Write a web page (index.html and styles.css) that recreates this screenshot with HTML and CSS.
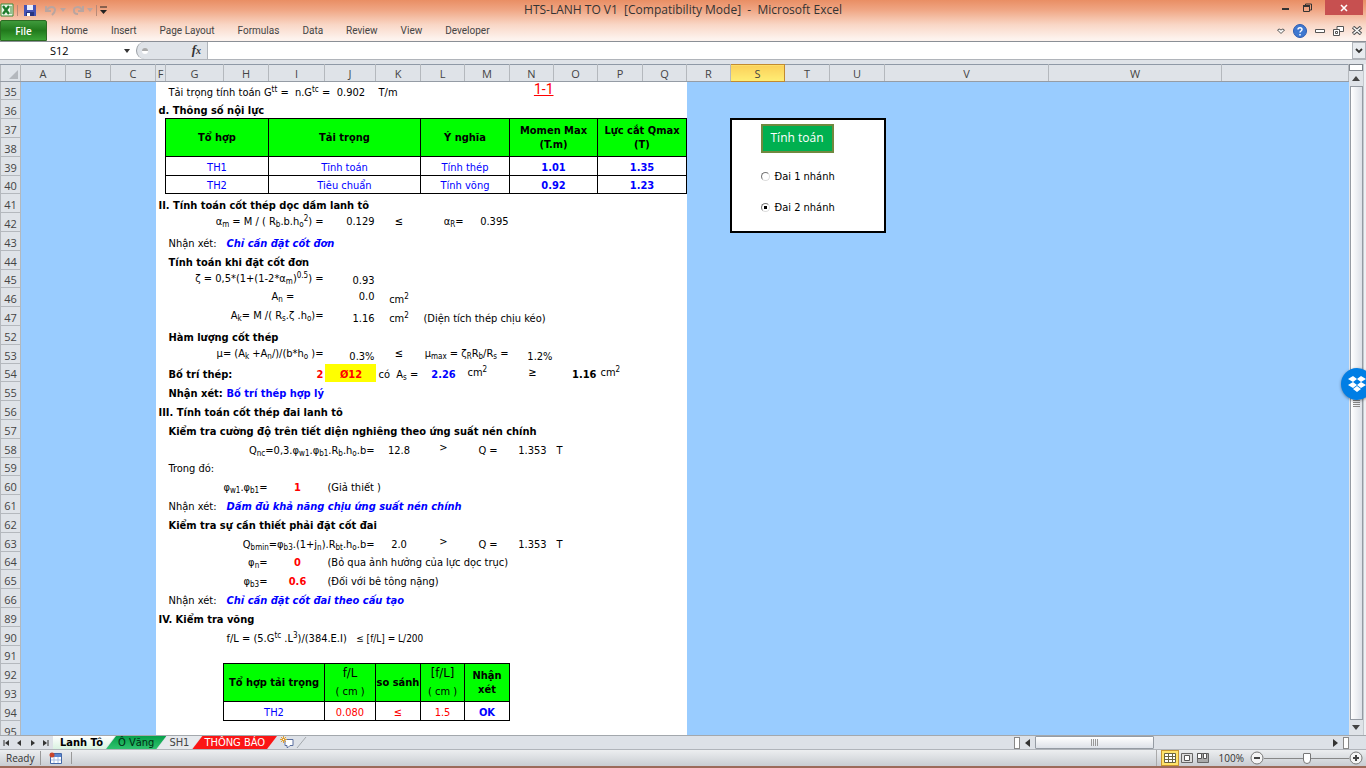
FILE: index.html
```
<!doctype html>
<html lang="vi">
  <head>
    <meta charset="UTF-8" />
    <meta name="viewport" content="width=device-width, initial-scale=1.0" />
    <title>HTS-LANH TO V1 [Compatibility Mode] - Microsoft Excel</title>
    <link rel="stylesheet" href="styles.css">
  </head>
  <body>
    <header class="window-top">
      <div class="title-bar">
        <div class="quick-access">
          <svg width="14" height="14" viewBox="0 0 14 14"><path d="M1 1h12v12H1z" fill="#eef6e8" stroke="#3d8b37"/><path d="M3 3l6 8M9 3l-6 8" stroke="#1d7a2c" stroke-width="2.4"/><path d="M11 3v8" stroke="#3d8b37"/></svg>
          <span class="divider"></span>
          <button class="icon-btn save" aria-label="Save"><svg width="12" height="12" viewBox="0 0 12 12"><path d="M0 1h12v11H0z" fill="#4653b5"/><path d="M3 1h6v5H3z" fill="#e9eefb"/><path d="M2 8h8v4H2z" fill="#293580"/><path d="M3 9h3v3H3z" fill="#fff"/></svg></button>
          <button class="icon-btn" aria-label="Undo"><svg width="12" height="11" viewBox="0 0 12 11"><path d="M1 1v5h5M1.500 5.500C4 1 10 1 10 5c0 2-1 3-3 5" fill="none" stroke="#b9a5a0" stroke-width="2"/></svg></button>
          <span class="caret faint"></span>
          <button class="icon-btn redo" aria-label="Redo"><svg width="12" height="11" viewBox="0 0 12 11"><path d="M11 1v5H6M10 5C8 1 1 1 2 6c0 2 2 3 4 3" fill="none" stroke="#b9a5a0" stroke-width="2"/></svg></button>
          <span class="caret faint"></span>
          <span class="divider"></span>
          <button class="icon-btn" aria-label="Customize"><svg width="7" height="8" viewBox="0 0 7 8"><path d="M0 1h7" stroke="#222"/><path d="M0 4h7L3.500 8z" fill="#222"/></svg></button>
        </div>
        <h1>HTS-LANH TO V1 &nbsp;[Compatibility Mode] &nbsp;- &nbsp;Microsoft Excel</h1>
        <div class="window-buttons">
          <button class="icon-btn" aria-label="Minimize"><svg width="8" height="8" viewBox="0 0 8 8"><path d="M0 6h7" stroke="#333" stroke-width="2"/></svg></button>
          <button class="icon-btn" aria-label="Restore"><svg width="9" height="9" viewBox="0 0 9 9"><path d="M.5 3.500h6v5h-6zM2.500 3V1h6v6H7" fill="none" stroke="#333"/><path d="M0 3h7" stroke="#333" stroke-width="2"/></svg></button>
          <button class="close" aria-label="Close"><svg width="8" height="8" viewBox="0 0 8 8"><path d="M1 1l6 6M7 1L1 7" stroke="#fff" stroke-width="1.600"/></svg></button>
        </div>
      </div>
      <nav class="ribbon">
        <button class="file-tab">File</button>
        <a href="#">Home</a>
        <a href="#">Insert</a>
        <a href="#">Page Layout</a>
        <a href="#">Formulas</a>
        <a href="#">Data</a>
        <a href="#">Review</a>
        <a href="#">View</a>
        <a href="#">Developer</a>
        <div class="ribbon-tools">
          <svg width="8" height="6" viewBox="0 0 8 6"><path d="M.5 2Q2 0 4 2q2-2 3.500 0L4 5.500z" fill="#fff" stroke="#555"/></svg>
          <button class="icon-btn" aria-label="Help"><svg width="14" height="14" viewBox="0 0 14 14"><circle cx="7" cy="7" r="6.500" fill="#3f78d0" stroke="#2c5cb0"/><path d="M5 5.500C5 3 9 3 9 5.500 9 7 7 7 7 8.500M7 10v1.500" fill="none" stroke="#fff" stroke-width="1.500"/></svg></button>
          <button class="icon-btn" aria-label="Minimize workbook"><svg width="10" height="6" viewBox="0 0 10 6"><path d="M.5 1.500h9v3h-9z" fill="#fff" stroke="#555"/></svg></button>
          <button class="icon-btn" aria-label="Restore workbook"><svg width="11" height="10" viewBox="0 0 11 10"><path d="M4 .5h6.500v5H4z" fill="#fff" stroke="#555"/><path d="M.5 3.500h6v6h-6z" fill="#fff" stroke="#555"/><path d="M2.500 5.500h2v2h-2z" fill="none" stroke="#555"/></svg></button>
          <button class="icon-btn" aria-label="Close workbook"><svg width="10" height="9" viewBox="0 0 10 9"><path d="M1 1l8 7M9 1L1 8" stroke="#555" stroke-width="3.500"/><path d="M1.500 1.500l7 6M8.500 1.500l-7 6" stroke="#fff" stroke-width="1.400"/></svg></button>
        </div>
      </nav>
    </header>

    <div class="formula-bar">
      <input class="name-box" type="text" value="S12" aria-label="Name box" />
      <span class="caret"></span>
      <div class="fx-area"><span class="fx-dot"></span><button class="fx-btn">f<small>x</small></button></div>
      <input class="formula-input" type="text" aria-label="Formula" />
      <button class="expand" aria-label="Expand formula bar"><svg width="8" height="6" viewBox="0 0 8 6"><path d="M1 1l3 3 3-3" fill="none" stroke="#333" stroke-width="1.800"/></svg></button>
    </div>

    <main class="workbook">
      <div class="sheet">
        <table class="grid">
          <colgroup>
            <col class="w20"><col class="w45"><col class="w45"><col class="w45"><col class="w10"><col class="w58">
            <col class="w45"><col class="w56"><col class="w51"><col class="w45"><col class="w44"><col class="w45">
            <col class="w44"><col class="w44"><col class="w45"><col class="w44"><col class="w44"><col class="w54">
            <col class="w45"><col class="w55"><col class="w164"><col class="w173"><col>
          </colgroup>
          <thead>
            <tr>
              <th class="corner"><svg width="9" height="9" viewBox="0 0 9 9"><path d="M9 0v9H0z" fill="#b4b8bd"/></svg></th>
              <th>A</th><th>B</th><th>C</th><th>F</th><th>G</th><th>H</th><th>I</th><th>J</th><th>K</th><th>L</th><th>M</th>
              <th>N</th><th>O</th><th>P</th><th>Q</th><th>R</th><th class="selected">S</th><th>T</th><th>U</th><th>V</th><th>W</th><th></th>
            </tr>
          </thead>
          <tbody>
            <tr><th>35</th><td class="side" colspan="3"></td><td></td><td class="r" colspan="3">Tải trọng tính toán G<sup>tt</sup> =&nbsp; n.G<sup>tc</sup> =</td><td class="c">0.902</td><td>T/m</td><td colspan="2"></td><td class="section-mark"><u>1-1</u></td><td colspan="3"></td><td class="side" colspan="7"></td></tr>
            <tr><th>36</th><td class="side" colspan="3"></td><td class="b" colspan="12">d. Thông số nội lực</td><td class="side" colspan="7"></td></tr>
            <tr>
              <th>37</th><td class="side" colspan="3"></td><td></td>
              <td class="box head" colspan="2" rowspan="2">Tổ hợp</td><td class="box head" colspan="3" rowspan="2">Tải trọng</td><td class="box head" colspan="2" rowspan="2">Ý nghĩa</td><td class="box head" colspan="2" rowspan="2">Momen Max<br>(T.m)</td><td class="box head" colspan="2" rowspan="2">Lực cắt Qmax<br>(T)</td>
              <td class="side"></td>
              <td class="panel" colspan="3" rowspan="6">
                <form class="options">
                  <button type="button" class="calc-btn">Tính toán</button>
                  <label><input type="radio" name="dai">Đai 1 nhánh</label>
                  <label><input type="radio" name="dai" checked>Đai 2 nhánh</label>
                </form>
              </td>
              <td class="side" colspan="3"></td>
            </tr>
            <tr><th>38</th><td class="side" colspan="3"></td><td></td><td class="side"></td><td class="side" colspan="3"></td></tr>
            <tr><th>39</th><td class="side" colspan="3"></td><td></td><td class="box blue" colspan="2">TH1</td><td class="box blue" colspan="3">Tĩnh toán</td><td class="box blue" colspan="2">Tính thép</td><td class="box blue b" colspan="2">1.01</td><td class="box blue b" colspan="2">1.35</td><td class="side"></td><td class="side" colspan="3"></td></tr>
            <tr><th>40</th><td class="side" colspan="3"></td><td></td><td class="box blue" colspan="2">TH2</td><td class="box blue" colspan="3">Tiêu chuẩn</td><td class="box blue" colspan="2">Tính võng</td><td class="box blue b" colspan="2">0.92</td><td class="box blue b" colspan="2">1.23</td><td class="side"></td><td class="side" colspan="3"></td></tr>
            <tr><th>41</th><td class="side" colspan="3"></td><td class="b" colspan="12">II. Tính toán cốt thép dọc dầm lanh tô</td><td class="side"></td><td class="side" colspan="3"></td></tr>
            <tr><th>42</th><td class="side" colspan="3"></td><td></td><td class="r mid" colspan="3">α<sub>m</sub> = M / ( R<sub>b</sub>.b.h<sub>o</sub><sup>2</sup>) =</td><td class="r mid">0.129</td><td class="c mid">≤</td><td class="r mid">α<sub>R</sub>=</td><td class="r mid">0.395</td><td colspan="4"></td><td class="side"></td><td class="side" colspan="3"></td></tr>
            <tr><th>43</th><td class="side" colspan="3"></td><td></td><td>Nhận xét:</td><td class="note" colspan="10">Chỉ cần đặt cốt đơn</td><td class="side" colspan="7"></td></tr>
            <tr><th>44</th><td class="side" colspan="3"></td><td></td><td class="b" colspan="11">Tính toán khi đặt cốt đơn</td><td class="side" colspan="7"></td></tr>
            <tr><th>45</th><td class="side" colspan="3"></td><td></td><td class="r mid" colspan="3">ζ = 0,5*(1+(1-2*α<sub>m</sub>)<sup>0.5</sup>) =</td><td class="r">0.93</td><td colspan="7"></td><td class="side" colspan="7"></td></tr>
            <tr><th>46</th><td class="side" colspan="3"></td><td></td><td colspan="2"></td><td class="mid">A<sub>n</sub> =</td><td class="r mid">0.0</td><td class="c">cm<sup>2</sup></td><td colspan="6"></td><td class="side" colspan="7"></td></tr>
            <tr><th>47</th><td class="side" colspan="3"></td><td></td><td class="r mid" colspan="3">A<sub>k</sub>= M /( R<sub>s</sub>.ζ .h<sub>o</sub>)=</td><td class="r">1.16</td><td class="c">cm<sup>2</sup></td><td colspan="6">(Diện tích thép chịu kéo)</td><td class="side" colspan="7"></td></tr>
            <tr><th>52</th><td class="side" colspan="3"></td><td></td><td class="b" colspan="11">Hàm lượng cốt thép</td><td class="side" colspan="7"></td></tr>
            <tr><th>53</th><td class="side" colspan="3"></td><td></td><td class="r mid" colspan="3">μ= (A<sub>k</sub> +A<sub>n</sub>/)/(b*h<sub>o</sub> )=</td><td class="r">0.3%</td><td class="c mid">≤</td><td class="r mid" colspan="2">μ<sub>max</sub> = ζ<sub>R</sub>R<sub>b</sub>/R<sub>s</sub> =</td><td class="r">1.2%</td><td colspan="3"></td><td class="side" colspan="7"></td></tr>
            <tr><th>54</th><td class="side" colspan="3"></td><td></td><td class="b" colspan="2">Bố trí thép:</td><td class="r b red">2</td><td class="c b red yellow">Ø12</td><td>có&nbsp; A<sub>s</sub> =</td><td class="c b blue">2.26</td><td class="mid">cm<sup>2</sup></td><td class="c mid">≥</td><td class="r b">1.16</td><td class="mid" colspan="2">cm<sup>2</sup></td><td class="side" colspan="7"></td></tr>
            <tr><th>55</th><td class="side" colspan="3"></td><td></td><td class="b">Nhận xét:</td><td class="b blue" colspan="10">Bố trí thép hợp lý</td><td class="side" colspan="7"></td></tr>
            <tr><th>56</th><td class="side" colspan="3"></td><td class="b" colspan="12">III. Tính toán cốt thép đai lanh tô</td><td class="side" colspan="7"></td></tr>
            <tr><th>57</th><td class="side" colspan="3"></td><td></td><td class="b" colspan="11">Kiểm tra cường độ trên tiết diện nghiêng theo ứng suất nén chính</td><td class="side" colspan="7"></td></tr>
            <tr><th>58</th><td class="side" colspan="3"></td><td></td><td class="r" colspan="4">Q<sub>nc</sub>=0,3.φ<sub>w1</sub>.φ<sub>b1</sub>.R<sub>b</sub>.h<sub>o</sub>.b=</td><td class="c">12.8</td><td class="c mid">&gt;</td><td class="c">Q =</td><td class="c">1.353</td><td colspan="3">T</td><td class="side" colspan="7"></td></tr>
            <tr><th>59</th><td class="side" colspan="3"></td><td></td><td colspan="11">Trong đó:</td><td class="side" colspan="7"></td></tr>
            <tr><th>60</th><td class="side" colspan="3"></td><td></td><td class="r" colspan="2">φ<sub>w1</sub>.φ<sub>b1</sub>=</td><td class="c b red">1</td><td colspan="8">(Giả thiết )</td><td class="side" colspan="7"></td></tr>
            <tr><th>61</th><td class="side" colspan="3"></td><td></td><td>Nhận xét:</td><td class="note" colspan="10">Dầm đủ khả năng chịu ứng suất nén chính</td><td class="side" colspan="7"></td></tr>
            <tr><th>62</th><td class="side" colspan="3"></td><td></td><td class="b" colspan="11">Kiểm tra sự cần thiết phải đặt cốt đai</td><td class="side" colspan="7"></td></tr>
            <tr><th>63</th><td class="side" colspan="3"></td><td></td><td class="r" colspan="4">Q<sub>bmin</sub>=φ<sub>b3</sub>.(1+j<sub>n</sub>).R<sub>bt</sub>.h<sub>o</sub>.b=</td><td class="c">2.0</td><td class="c mid">&gt;</td><td class="c">Q =</td><td class="c">1.353</td><td colspan="3">T</td><td class="side" colspan="7"></td></tr>
            <tr><th>64</th><td class="side" colspan="3"></td><td></td><td class="r" colspan="2">φ<sub>n</sub>=</td><td class="c b red">0</td><td colspan="8">(Bỏ qua ảnh hưởng của lực dọc trục)</td><td class="side" colspan="7"></td></tr>
            <tr><th>65</th><td class="side" colspan="3"></td><td></td><td class="r" colspan="2">φ<sub>b3</sub>=</td><td class="c b red">0.6</td><td colspan="8">(Đối với bê tông nặng)</td><td class="side" colspan="7"></td></tr>
            <tr><th>66</th><td class="side" colspan="3"></td><td></td><td>Nhận xét:</td><td class="note" colspan="10">Chỉ cần đặt cốt đai theo cấu tạo</td><td class="side" colspan="7"></td></tr>
            <tr><th>89</th><td class="side" colspan="3"></td><td class="b" colspan="12">IV. Kiểm tra võng</td><td class="side" colspan="7"></td></tr>
            <tr><th>90</th><td class="side" colspan="3"></td><td></td><td></td><td colspan="10">f/L = (5.G<sup>tc</sup> .L<sup>3</sup>)/(384.E.I) &nbsp; <span class="limit">≤ [f/L] = L/200</span></td><td class="side" colspan="7"></td></tr>
            <tr><th>91</th><td class="side" colspan="3"></td><td colspan="12"></td><td class="side" colspan="7"></td></tr>
            <tr><th>92</th><td class="side" colspan="3"></td><td colspan="2"></td><td class="box head" colspan="2" rowspan="2">Tổ hợp tải trọng</td><td class="box head ratio" rowspan="2"><big>f/L</big><br>( cm )</td><td class="box head" rowspan="2">so sánh</td><td class="box head ratio" rowspan="2"><big>[f/L]</big><br>( cm )</td><td class="box head" rowspan="2">Nhận<br>xét</td><td colspan="4"></td><td class="side" colspan="7"></td></tr>
            <tr><th>93</th><td class="side" colspan="3"></td><td colspan="2"></td><td colspan="4"></td><td class="side" colspan="7"></td></tr>
            <tr><th>94</th><td class="side" colspan="3"></td><td colspan="2"></td><td class="box blue" colspan="2">TH2</td><td class="box red">0.080</td><td class="box red">≤</td><td class="box red">1.5</td><td class="box blue b">OK</td><td colspan="4"></td><td class="side" colspan="7"></td></tr>
            <tr><th>95</th><td class="side" colspan="3"></td><td colspan="12"></td><td class="side" colspan="7"></td></tr>
          </tbody>
        </table>
      </div>
      <div class="v-scroll">
        <span class="split-box"></span>
        <button class="arrow" aria-label="Scroll up"><svg width="8" height="5" viewBox="0 0 8 5"><path d="M0 5l4-5 4 5z" fill="#444"/></svg></button>
        <div class="v-thumb"><span class="grip"></span></div>
        <button class="arrow" aria-label="Scroll down"><svg width="8" height="5" viewBox="0 0 8 5"><path d="M0 0h8L4 5z" fill="#444"/></svg></button>
      </div>
      <button class="dropbox" aria-label="Dropbox"><svg width="18" height="16" viewBox="0 0 18 16"><path d="M5 0l4 3-4 3-5-3zM13 0l5 3-5 3-4-3zM5 6l4 3-4 3-5-3zM13 6l5 3-5 3-4-3zM9 10l4 3-4 3-4-3z" fill="#fff"/></svg></button>
    </main>

    <div class="tab-bar">
      <div class="tab-nav">
        <button class="icon-btn" aria-label="First sheet"><svg width="7" height="6" viewBox="0 0 7 6"><path d="M1 0v6" stroke="#333"/><path d="M6 0v6L2 3z" fill="#333"/></svg></button>
        <button class="icon-btn" aria-label="Previous sheet"><svg width="7" height="6" viewBox="0 0 7 6"><path d="M5 0v6L1 3z" fill="#333"/></svg></button>
        <button class="icon-btn" aria-label="Next sheet"><svg width="7" height="6" viewBox="0 0 7 6"><path d="M2 0v6l4-3z" fill="#333"/></svg></button>
        <button class="icon-btn" aria-label="Last sheet"><svg width="7" height="6" viewBox="0 0 7 6"><path d="M6 0v6" stroke="#333"/><path d="M1 0v6l4-3z" fill="#333"/></svg></button>
      </div>
      <div class="tabs">
        <button class="tab active">Lanh Tô</button>
        <button class="tab green">Ô Văng</button>
        <button class="tab">SH1</button>
        <button class="tab alert">THÔNG BÁO</button>
        <button class="icon-btn new-sheet" aria-label="Insert worksheet"><svg width="30" height="13" viewBox="0 0 30 13"><path d="M5 3.500h8v6H10l-2 2H7v-2H5z" fill="#fff" stroke="#5a6fa0"/><path d="M3.500 0v7M0 3.500h7M1 1l5 5M6 1L1 6" stroke="#e0a030"/><path d="M3 3h1v1H3z" fill="#fff"/><path d="M26 1L17 12" stroke="#a3a8ad"/></svg></button>
      </div>
      <div class="h-scroll">
        <span class="split"></span>
        <button class="icon-btn" aria-label="Scroll left"><svg width="5" height="8" viewBox="0 0 5 8"><path d="M5 0v8L0 4z" fill="#333"/></svg></button>
        <div class="h-track"><div class="h-thumb"><span class="grip side-grip"></span></div></div>
        <button class="icon-btn" aria-label="Scroll right"><svg width="5" height="8" viewBox="0 0 5 8"><path d="M0 0v8l5-4z" fill="#333"/></svg></button>
        <span class="split"></span>
      </div>
    </div>

    <footer class="status-bar">
      <span class="ready">Ready</span>
      <button class="icon-btn macro" aria-label="Record macro"><svg width="13" height="12" viewBox="0 0 13 12"><path d="M1.500 1.500h11v10h-11z" fill="#fff" stroke="#4468a8"/><path d="M2 2h10v3H2z" fill="#5b86cf"/><path d="M2 8h10M5 5v6M9 5v6" stroke="#a9bfe4"/><circle cx="3" cy="3" r="2.500" fill="#c8452b"/></svg></button>
      <div class="zoom">
        <button class="icon-btn view on" aria-label="Normal view"><svg width="12" height="10" viewBox="0 0 12 10"><path d="M.5.500h11v9H.5zM4.500 0v10M8.500 0v10M0 3.500h12M0 6.500h12" fill="#fff" stroke="#6b6440"/></svg></button>
        <button class="icon-btn view" aria-label="Page layout view"><svg width="12" height="10" viewBox="0 0 12 10"><path d="M.5.500h11v9H.5z" fill="#ddd" stroke="#666"/><path d="M3.500 2.500h5v5h-5z" fill="#fff" stroke="#555"/></svg></button>
        <button class="icon-btn view" aria-label="Page break view"><svg width="12" height="10" viewBox="0 0 12 10"><path d="M.5.500h11v9H.5z" fill="#aaa" stroke="#666"/><path d="M.5.500h4v5h-4zM6.500.500h3v5h-3z" fill="#fff" stroke="#555"/></svg></button>
        <span class="percent">100%</span>
        <button class="icon-btn" aria-label="Zoom out"><svg width="14" height="14" viewBox="0 0 14 14"><circle cx="7" cy="7" r="6" fill="#f5f5f5" stroke="#777"/><path d="M4 7h6" stroke="#444" stroke-width="2"/></svg></button>
        <input type="range" min="0" max="100" value="50" aria-label="Zoom" />
        <button class="icon-btn" aria-label="Zoom in"><svg width="14" height="14" viewBox="0 0 14 14"><circle cx="7" cy="7" r="6" fill="#f5f5f5" stroke="#777"/><path d="M4 7h6M7 4v6" stroke="#444" stroke-width="2"/></svg></button>
      </div>
    </footer>
  </body>
</html>
```
FILE: styles.css
```
* {
  margin: 0;
  padding: 0;
  box-sizing: border-box;
}

body {
  display: flex;
  flex-direction: column;
  height: 100vh;
  overflow: hidden;
  font-family: "Open Sans", "Noto Sans", sans-serif;
  font-size: 10px;
  color: #333;
  background: #dfe3e8;
}

button,
input {
  font: inherit;
  color: inherit;
}

svg {
  display: block;
}

.icon-btn {
  border: none;
  background: none;
}

.caret {
  border: 3px solid transparent;
  border-top: 4px solid #333;
  border-bottom: 0;
}

.caret.faint {
  border-top-color: #b9a5a0;
}

/* Title bar and ribbon */
.window-top {
  background: linear-gradient(#e98e64, #f0a785 25%, #f9d6c5 60%, #fdf3ee 95%);
  border-bottom: 1px solid #8b8f96;
}

.title-bar {
  display: grid;
  grid-template-columns: 1fr auto 1fr;
  height: 20px;
}

.quick-access {
  display: flex;
  align-items: center;
  gap: 3px;
}

.save {
  margin: 0 6px 0 3px;
}

.redo {
  margin-left: 3px;
}

.divider {
  width: 1px;
  height: 11px;
  background: #b98a78;
}

.title-bar h1 {
  font-size: 12px;
  font-weight: 400;
  line-height: 20px;
}

.window-buttons {
  display: flex;
  justify-content: flex-end;
  align-items: flex-start;
  gap: 13px;
  padding-right: 3px;
}

.window-buttons .icon-btn {
  padding-top: 3px;
}

.close {
  display: flex;
  align-items: center;
  justify-content: center;
  width: 38px;
  height: 15px;
  border: none;
  background: #c75050;
}

.ribbon {
  display: flex;
  align-items: center;
  gap: 23px;
  height: 21px;
  padding-right: 4px;
}

.ribbon a {
  color: #444;
  font-family: Roboto, sans-serif;
  text-decoration: none;
}

.file-tab {
  width: 47px;
  height: 21px;
  margin-right: -9px;
  border: 1px solid #2b6b22;
  border-radius: 2px 2px 0 0;
  background: linear-gradient(#3f9a3c, #217a1c 50%, #3ba336);
  color: #fff;
  font-weight: 600;
}

.ribbon-tools {
  display: flex;
  align-items: center;
  gap: 8px;
  margin-left: auto;
}

/* Formula bar */
.formula-bar {
  display: flex;
  align-items: center;
  height: 18px;
  background: #fff;
  border-bottom: 1px solid #b0b4ba;
}

.name-box {
  width: 124px;
  padding-left: 50px;
  border: none;
  color: #000;
  font-size: 11px;
}

.fx-area {
  display: flex;
  align-items: center;
  justify-content: space-between;
  width: 72px;
  height: 17px;
  margin-left: 6px;
  padding: 0 6px 0 5px;
  border-left: 1px solid #9a9ea4;
  border-right: 1px solid #b0b4ba;
  border-radius: 9px 0 0 9px;
  background: #dfe3e8;
}

.fx-dot {
  width: 6px;
  height: 6px;
  border-radius: 50%;
  background: linear-gradient(#aaa 50%, #fff 50%);
}

.fx-btn {
  border: none;
  background: none;
  font-family: "Liberation Serif", serif;
  font-size: 13px;
  font-weight: 700;
  font-style: italic;
  line-height: 16px;
}

.fx-btn small {
  font-size: 10px;
}

.formula-input {
  flex: 1;
  border: none;
}

.expand {
  display: flex;
  align-items: center;
  justify-content: center;
  width: 14px;
  height: 17px;
  border: 1px solid #b0b4ba;
  background: #e8ebef;
}

/* Worksheet */
.workbook {
  position: relative;
  display: flex;
  flex: 1;
  min-height: 0;
  margin-top: 4px;
}

.sheet {
  flex: 1;
  overflow: hidden;
  background: #99ccff;
}

.grid {
  width: 100%;
  table-layout: fixed;
  border-collapse: collapse;
  font-family: "DejaVu Sans Condensed", "DejaVu Sans", sans-serif;
  font-size: 11px;
  line-height: 14px;
  color: #000;
}

.w10 { width: 10px; }
.w20 { width: 20px; }
.w44 { width: 44px; }
.w45 { width: 45px; }
.w51 { width: 51px; }
.w54 { width: 54px; }
.w55 { width: 55px; }
.w56 { width: 56px; }
.w58 { width: 58px; }
.w164 { width: 164px; }
.w173 { width: 173px; }

.grid tr {
  height: 19px;
}

.grid tbody tr:nth-child(5n + 1) {
  height: 18px;
}

.grid thead tr {
  height: 17px;
}

.grid th {
  border: 1px solid #b4b8bd;
  background: #dfe3e8;
  color: #444;
  font-family: "Open Sans", "Noto Sans", sans-serif;
  font-weight: 400;
  vertical-align: bottom;
}

.grid thead th {
  border-top-color: #8f99a6;
  border-bottom-color: #959ca5;
}

.grid thead th.selected {
  border: 1px solid #c28a30;
  background: linear-gradient(#fbd05a, #ffee75);
}

.corner svg {
  margin: 0 0 2px 8px;
}

.grid td {
  padding: 0 1px 0 3px;
  background: #fff;
  vertical-align: bottom;
  white-space: nowrap;
}

.grid td.side {
  background: none;
}

.grid .r { text-align: right; }
.grid .c { text-align: center; }
.grid .b { font-weight: 700; }
.grid .mid { vertical-align: middle; }
.grid .blue { color: #0000ff; }
.grid .red { color: #ff0000; }
.grid td.yellow { background: #ffff00; }

.grid .note {
  color: #0000ff;
  font-weight: 700;
  font-style: italic;
}

.grid sup,
.grid sub {
  font-size: 8px;
  line-height: 0;
  vertical-align: -2px;
}

.grid sup {
  vertical-align: 4px;
}

.grid .box {
  padding: 0;
  border: 1px solid #000;
  text-align: center;
}

.grid td.head {
  background: #00ff00;
  font-weight: 700;
  vertical-align: middle;
}

.grid td.ratio {
  font-weight: 400;
  line-height: 18px;
}

.ratio big {
  font-size: 13px;
}

.grid .section-mark {
  padding: 0;
  color: #ff0000;
  font-family: Roboto, sans-serif;
  font-size: 14px;
  text-align: right;
  vertical-align: top;
}

.limit {
  font-size: 10px;
}

.grid td.panel {
  padding: 4px 0 0 29px;
  border: 2px solid #000;
  vertical-align: top;
}

.options {
  display: flex;
  flex-direction: column;
  align-items: flex-start;
  gap: 17px;
}

.calc-btn {
  width: 73px;
  height: 29px;
  border: 2px solid #71893f;
  background: #00b050;
  color: #fff;
  font-family: "Open Sans", "Noto Sans", sans-serif;
  font-size: 12px;
}

.options label {
  display: flex;
  align-items: center;
  gap: 5px;
}

.options input {
  appearance: none;
  width: 9px;
  height: 9px;
  border: 1px solid #777;
  border-right-color: #ddd;
  border-bottom-color: #ddd;
  border-radius: 50%;
  background: #fff;
}

.options input:checked {
  background: radial-gradient(circle, #000 2px, #fff 2px);
}

/* Scroll bars */
.v-scroll {
  display: flex;
  flex-direction: column;
  align-items: center;
  width: 17px;
  padding-right: 3px;
  background: linear-gradient(90deg, #dfe3e8 14px, #9aa1aa 14px, #eef0f3 15px);
}

.split-box {
  width: 14px;
  height: 7px;
  border: 1px solid #7f858d;
  background: #fff;
}

.arrow {
  display: flex;
  align-items: center;
  justify-content: center;
  width: 14px;
  height: 15px;
  border: none;
  background: none;
}

.v-thumb {
  display: flex;
  flex: 1;
  align-items: center;
  justify-content: center;
  width: 13px;
  border: 1px solid #959ba3;
  background: linear-gradient(90deg, #fff, #dde1e8);
}

.grip {
  width: 7px;
  height: 7px;
  background: repeating-linear-gradient(#888 0 1px, transparent 1px 2px);
}

.side-grip {
  background: repeating-linear-gradient(90deg, #999 0 1px, transparent 1px 2px);
}

.dropbox {
  position: absolute;
  top: 304px;
  right: -7px;
  width: 32px;
  height: 32px;
  padding-left: 7px;
  border: none;
  border-radius: 50%;
  background: #007ee5;
  box-shadow: 0 1px 3px rgba(0, 0, 0, 0.4);
}

/* Sheet tabs */
.tab-bar {
  display: flex;
  align-items: center;
  height: 14px;
  background: #dde1e7;
  border-top: 1px solid #a3a8ad;
}

.tab-nav {
  display: flex;
  gap: 6px;
  width: 53px;
  padding-left: 3px;
}

.tabs {
  display: flex;
  align-items: center;
}

.tab {
  height: 13px;
  margin-right: -9px;
  padding: 0 12px;
  border: none;
  background: #e6e9ed;
  clip-path: polygon(10px 0, 100% 0, calc(100% - 10px) 100%, 0 100%);
  color: #444;
  font-family: "DejaVu Sans Condensed", "DejaVu Sans", sans-serif;
  font-size: 11px;
  line-height: 13px;
}

.tab.active {
  padding: 0 12px 0 7px;
  background: linear-gradient(#fff, #d9f2e0);
  clip-path: polygon(0 0, 100% 0, calc(100% - 10px) 100%, 0 100%);
  color: #000;
  font-weight: 700;
}

.tab.green {
  background: linear-gradient(#07a04a, #2fc26e);
  color: #002a12;
}

.tab.alert {
  background: #fb1515;
  color: #fff;
}

.new-sheet {
  margin-left: 12px;
}

.h-scroll {
  display: flex;
  align-items: center;
  gap: 5px;
  width: 352px;
  margin-left: auto;
  padding-right: 17px;
}

.split {
  width: 6px;
  height: 12px;
  border: 1px solid #888;
  background: #fff;
}

.h-track {
  flex: 1;
}

.h-thumb {
  display: flex;
  align-items: center;
  justify-content: center;
  width: 119px;
  height: 13px;
  border: 1px solid #959ba3;
  border-radius: 1px;
  background: linear-gradient(#fff, #dde1e8);
}

/* Status bar */
.status-bar {
  display: flex;
  align-items: center;
  height: 19px;
  border-top: 1px solid #b0b4ba;
  border-bottom: 2px solid #9c6a5a;
  background: linear-gradient(#eceef0, #c9cdd2);
}

.ready {
  width: 41px;
  padding-left: 6px;
  border-right: 1px solid #999;
}

.macro {
  padding: 0 9px 0 8px;
  border-right: 1px solid #999;
}

.zoom {
  display: flex;
  align-items: center;
  margin-left: auto;
  padding-right: 3px;
  border-left: 1px solid #aaa;
}

.view {
  padding: 2px;
}

.view.on {
  margin-left: 4px;
  border: 1px solid #c9962f;
  background: #ffe36a;
}

.percent {
  padding: 0 6px 0 8px;
}

.zoom input {
  appearance: none;
  width: 85px;
  height: 12px;
  background: linear-gradient(#888, #888) center / 100% 1px no-repeat;
}

.zoom input::-webkit-slider-thumb {
  appearance: none;
  width: 8px;
  height: 11px;
  border: 1px solid #777;
  border-radius: 1px 1px 4px 4px;
  background: #fff;
}
```
